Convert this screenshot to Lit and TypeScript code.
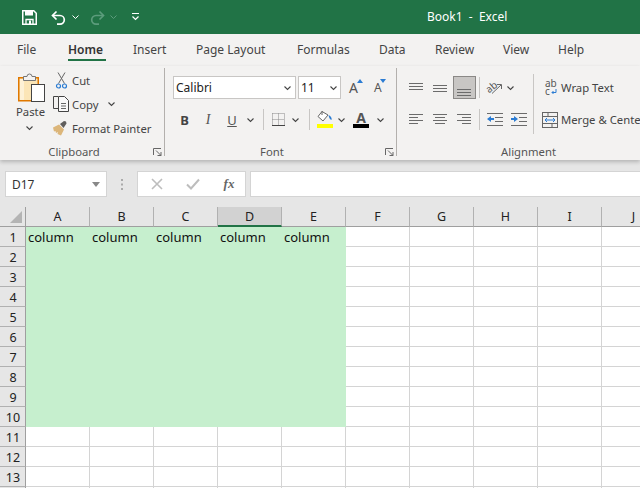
import { LitElement, html, css, svg } from "lit";
import { customElement } from "lit/decorators.js";

const chev = html`<svg class="chev" width="7" height="4" viewBox="0 0 7 4"><path d="M.5.5l3 3 3-3" fill="none" stroke="#444" stroke-width="1.1"/></svg>`;

const lines = (rows: [number, number, number][], color = "#6b6b6b") =>
  svg`${rows.map(([x1, x2, y]) => svg`<path d="M${x1} ${y + 0.5}H${x2}" stroke=${color} fill="none"/>`)}`;

const ic = (w: number, h: number, body: unknown) =>
  html`<svg width=${w} height=${h} viewBox="0 0 ${w} ${h}">${body}</svg>`;

const COLS = "ABCDEFGHIJ".split("");
const ROWS = Array.from({ length: 14 }, (_, i) => i + 1);

@customElement("app-root")
export class AppRoot extends LitElement {
  static styles = css`
    :host { display: block; width: 640px; height: 488px; overflow: hidden; background: #e6e6e6; font-family: "Noto Sans", sans-serif; color: #444; font-size: 12px; }
    * { box-sizing: border-box; }
    svg { overflow: visible; }
    .title { height: 34px; background: #217346; display: flex; align-items: center; padding-left: 22px; position: relative; color: #fff; }
    .title svg { display: block; flex: none; }
    .qa { display: flex; align-items: center; }
    .qa .s1 { margin-left: 14px; } .qa .s2 { margin-left: 6px; } .qa .s3 { margin-left: 11px; } .qa .s4 { margin-left: 5px; } .qa .s5 { margin-left: 15px; }
    .doc { position: absolute; left: 0; right: 0; top: 0; height: 33px; line-height: 33px; padding-left: 427px; font-size: 12px; white-space: pre; }
    .tabs { height: 32px; background: #f3f2f1; display: grid; grid-template-columns: 51px 65px 63px 101px 82px 56px 68px 55px auto; padding-left: 17px; }
    .tab { line-height: 32px; white-space: nowrap; height: 32px; color: #444; font-size: 12px; }
    .tab.on { font-weight: 600; color: #333; position: relative; }
    .tab.on::after { content: ""; position: absolute; left: 0; width: 38px; bottom: 5px; height: 2px; background: #217346; }
    .ribbon { height: 94px; background: #f3f2f1; display: flex; box-shadow: 0 2px 4px rgba(0,0,0,.22); position: relative; overflow: hidden; font-size: 11.3px; }
    .wrap-shadow { height: 6px; }
    .group { margin-top: 2px; height: 88px; border-right: 1px solid #b3b0ad; position: relative; display: flex; flex-direction: column; flex: none; }
    .g1 { width: 165px; } .g2 { width: 232px; } .g3 { flex: 1; border-right: 0; }
    .body { height: 77px; display: flex; flex: none; }
    .label { text-align: center; line-height: 14px; height: 14px; white-space: nowrap; font-size: 11.3px; color: #555; flex: none; }
    .g1 .label { width: 148px; }
    .g2 .label { width: 214px; }
    .g3 .label { width: 263px; }
    .launch { position: absolute; right: 2px; bottom: 0px; display: block; }
    /* clipboard */
    .paste { width: 53px; padding: 3px 0 0 18px; display: flex; flex-direction: column; }
    .paste span { margin: 3px 0 0 -2px; line-height: 14px; width: 28px; }
    .paste .chev { margin: 7px 0 0 8px; }
    .cmds { display: flex; flex-direction: column; padding-top: 0; }
    .cmd { height: 24px; display: flex; align-items: center; white-space: nowrap; }
    .cmd .icn { width: 19px; display: flex; justify-content: flex-start; flex: none; }
    .cmd .icn.cut { padding-left: 3px; }
    .cmd .chev { margin-left: 10px; }
    /* font */
    .fontbody { flex-direction: column; padding: 8px 0 0 8px; }
    .combos { display: flex; gap: 2px; height: 23px; align-items: stretch; }
    .combo { background: #fff; border: 1px solid #c8c6c4; display: flex; align-items: center; justify-content: space-between; padding: 0 4px 0 2px; color: #222; font-size: 12px; flex: none; }
    .cf { width: 123px; } .cs { width: 43px; padding-right: 3px; }
    .gw { width: 26px; padding-left: 6px; line-height: 23px; font-size: 14px; position: relative; color: #555; flex: none; }
    .gs { width: 22px; padding-left: 3px; font-size: 12px; }
    .tri { position: absolute; top: 3px; right: 6px; }
    .gs .tri { right: 7px; }
    .row2 { display: grid; grid-template-columns: 23px 24px 24px 13px 12px 18px 16px 12px 19px 14px 25px 14px; margin-top: 9px; height: 23px; align-items: center; justify-items: center; }
    .vs { width: 1px; height: 21px; background: #c8c6c4; }
    .b { font-weight: 700; font-size: 13px; color: #444; }
    .i { font-style: italic; font-family: "Liberation Serif", serif; font-size: 14px; color: #555; }
    .u { text-decoration: underline; font-size: 13px; color: #555; }
    /* alignment */
    .alignbody { padding: 8px 0 0 7px; }
    .agrid { display: grid; grid-template-columns: 24px 24px 24px 7px 24px 24px; grid-auto-rows: 23px; row-gap: 9px; align-items: center; justify-items: center; }
    .atop { align-self: start; margin-top: 3px; }
    .sel { width: 23px; height: 23px; background: #c8c6c4; border: 1px solid #8a8886; display: flex; align-items: flex-end; justify-content: center; padding-bottom: 2px; }
    .orient { display: flex; align-items: center; gap: 4px; grid-column: span 2; justify-self: start; padding-left: 3px; }
    .vs2 { width: 1px; height: 60px; background: #c8c6c4; margin: -2px 8px 0 2px; }
    .wm { display: flex; flex-direction: column; gap: 9px; }
    .wmi { height: 23px; display: flex; align-items: center; white-space: nowrap; }
    .wmi svg { width: 17px; margin-right: 2px; flex: none; }
    /* formula bar */
    .fbar { height: 41px; display: flex; padding: 5px 0 0 5px; background: #e6e6e6; }
    .box { height: 26px; background: #fff; border: 1px solid #d4d4d4; display: flex; align-items: center; flex: none; }
    .name { width: 102px; justify-content: space-between; padding: 0 6px 0 6px; color: #333; font-size: 12px; }
    .dots { width: 30px; display: flex; justify-content: center; align-items: center; height: 26px; flex: none; }
    .fbtn { width: 109px; display: grid; grid-template-columns: 36px 36px 36px; justify-items: center; padding-left: 1px; }
    .fx { font-family: "Liberation Serif", serif; font-style: italic; font-weight: 700; font-size: 13px; color: #666; }
    .finput { flex: 1; margin-left: 4px; border-right: 0; }
    /* sheet */
    .sheet { display: grid; grid-template-columns: 26px repeat(10, 64px); grid-auto-rows: 20px; background: #fff; }
    .corner { background: #e6e6e6; border-right: 1px solid #9f9f9f; border-bottom: 1px solid #9f9f9f; position: relative; display: flex; align-items: flex-end; justify-content: flex-end; padding: 0 3px 3px 0; }
    .ch { background: #e6e6e6; border-right: 1px solid #b1b1b1; border-bottom: 1px solid #9f9f9f; text-align: center; line-height: 19px; font-size: 12.5px; color: #222; }
    .ch.act { background: #d2d2d2; border-bottom: 2px solid #217346; color: #222; }
    .rh { background: #e6e6e6; border-right: 1px solid #9f9f9f; border-bottom: 1px solid #b1b1b1; text-align: center; padding-top: 1px; line-height: 19px; font-size: 12.5px; color: #222; padding-left: 1px; }
    .c { border-right: 1px solid #d4d4d4; border-bottom: 1px solid #d4d4d4; font-size: 13px; padding-top: 1px; line-height: 19px; padding-left: 2px; color: #111; white-space: nowrap; }
    .c.g { background: #c6efce; border-color: #c6efce; }
  `;

  private launcher() {
    return html`<svg class="launch" width="9" height="8" viewBox="0 0 9 8"><path d="M.5 7V.5H8M3 2.500l5 5M8 4v3.500H4.500" fill="none" stroke="#666"/></svg>`;
  }

  render() {
    const tabs = ["File", "Home", "Insert", "Page Layout", "Formulas", "Data", "Review", "View", "Help"];
    return html`
      <div class="title">
        <div class="qa">
          ${ic(15, 15, svg`<path d="M.75.75h11l2.500 2.500v11H.75z" fill="none" stroke="#fff" stroke-width="1.500"/><rect x="3" y="1" width="8" height="4.500" fill="#fff"/><path d="M4 14V9.500h7V14" fill="none" stroke="#fff" stroke-width="1.300"/><rect x="7" y="10.500" width="2" height="3.500" fill="#fff"/>`)}
          <span class="s1">${ic(15, 15, svg`<path d="M5.500 1.500L1.500 5.500l4 4" fill="none" stroke="#fff" stroke-width="1.700"/><path d="M2 5.500h7a4.300 4.300 0 0 1 0 8.600H6" fill="none" stroke="#fff" stroke-width="1.700"/>`)}</span>
          <span class="s2">${ic(7, 4, svg`<path d="M.5.5l3 3 3-3" fill="none" stroke="#fff"/>`)}</span>
          <span class="s3">${ic(15, 15, svg`<path d="M9.500 1.500l4 4-4 4" fill="none" stroke="#5c9c7c" stroke-width="1.700"/><path d="M13 5.500H6a4.300 4.300 0 0 0 0 8.600h3" fill="none" stroke="#5c9c7c" stroke-width="1.700"/>`)}</span>
          <span class="s4">${ic(7, 4, svg`<path d="M.5.5l3 3 3-3" fill="none" stroke="#5c9c7c"/>`)}</span>
          <span class="s5">${ic(7, 8, svg`<path d="M0 .5h7" stroke="#fff"/><path d="M.5 3.500l3 3 3-3" fill="none" stroke="#fff" stroke-width="1.200"/>`)}</span>
        </div>
        <div class="doc">Book1  -  Excel</div>
      </div>
      <div class="tabs">
        ${tabs.map((t) => html`<div class="tab ${t === "Home" ? "on" : ""}">${t}</div>`)}
      </div>
      <div class="ribbon">
        <div class="group g1">
          <div class="body">
            <div class="paste">
              ${ic(28, 31, svg`<rect x=".75" y="6.750" width="19.500" height="23" fill="#fbe5b6" stroke="#e07800" stroke-width="1.500"/><rect x="2" y="8" width="4" height="21" fill="#fdf1d6"/><path d="M5.500 9.500V5.500h3.500a2.500 2.500 0 0 1 5 0H17.500V9.500z" fill="#f3f2f1" stroke="#777"/><rect x="13.500" y="13.500" width="13" height="17" fill="#fff" stroke="#444"/>`)}
              <span>Paste</span>
              ${chev}
            </div>
            <div class="cmds">
              <div class="cmd">
                <span class="icn cut">${ic(11, 17, svg`<path d="M2 .5l6.500 11M9 .5L2.500 11.500" stroke="#666" fill="none"/><circle cx="2.500" cy="14" r="2" fill="none" stroke="#2b7cd3" stroke-width="1.200"/><circle cx="8.500" cy="14" r="2" fill="none" stroke="#2b7cd3" stroke-width="1.200"/>`)}</span>
                Cut
              </div>
              <div class="cmd">
                <span class="icn">${ic(16, 16, svg`<path d="M5 .5H.5v12H5" fill="none" stroke="#444"/><path d="M5.500.5h6l4 4v11h-10z" fill="#f9f9f9" stroke="#444"/><path d="M8 7.500h5M8 10h5M8 12.500h5" stroke="#666"/>`)}</span>
                Copy ${chev}
              </div>
              <div class="cmd">
                <span class="icn">${ic(16, 16, svg`<path d="M0 7.500l6-3 5 5-3 6-3.500-1.500 .5-2-2 1 -.5-2-1.500.5z" fill="#dcb67a"/><path d="M7 4l4-3 2 .5 .5 2-3 4.500z" fill="#605e5c"/>`)}</span>
                Format Painter
              </div>
            </div>
          </div>
          <div class="label">Clipboard</div>
          ${this.launcher()}
        </div>
        <div class="group g2">
          <div class="body fontbody">
            <div class="combos">
              <div class="combo cf"><span>Calibri</span>${chev}</div>
              <div class="combo cs"><span>11</span>${chev}</div>
              <div class="gw">A<svg class="tri" width="6" height="4" viewBox="0 0 6 4"><path d="M0 4l3-4 3 4z" fill="#2b7cd3"/></svg></div>
              <div class="gw gs">A<svg class="tri" width="6" height="4" viewBox="0 0 6 4"><path d="M0 0l3 4 3-4z" fill="#2b7cd3"/></svg></div>
            </div>
            <div class="row2">
              <span class="b">B</span><span class="i">I</span><span class="u">U</span>${chev}
              <span class="vs"></span>
              ${ic(13, 13, svg`<path d="M.5 .5H12.500V12.500M.5.5V12.500M6.500.5V12.500M.5 6.500H12.500" fill="none" stroke="#888" stroke-dasharray="1 1"/><path d="M0 12.500H13" stroke="#444"/>`)}
              ${chev}
              <span class="vs"></span>
              ${ic(16, 19, svg`<path d="M5 1.500l-4 5 5 4.500 5-6z" fill="#fff" stroke="#666"/><path d="M5 1V5" stroke="#666"/><path d="M11.500 5c2.500 1 3.500 3 3 5-1.500-.5-2.500-2-3-5z" fill="#2b7cd3"/><rect x="0" y="14" width="16" height="4" fill="#ffff00"/>`)}
              ${chev}
              <svg width="16" height="19" viewBox="0 0 16 19"><text x="8" y="13" text-anchor="middle" font-size="14" font-weight="700" font-family="Noto Sans" fill="#555">A</text><rect y="14" width="16" height="4" fill="#000"/></svg>
              ${chev}
            </div>
          </div>
          <div class="label">Font</div>
          ${this.launcher()}
        </div>
        <div class="group g3">
          <div class="body alignbody">
            <div class="agrid">
              <span class="atop">${ic(14, 8, lines([[0, 14, 0], [0, 14, 3], [0, 14, 6]]))}</span>
              ${ic(14, 8, lines([[0, 14, 1], [0, 14, 4], [0, 14, 7]]))}
              <div class="sel">${ic(14, 8, lines([[0, 14, 1], [0, 14, 4], [0, 14, 7]]))}</div>
              <span class="vs"></span>
              <div class="orient">
                ${ic(17, 15, svg`<text x="0" y="11" font-size="10" font-family="Noto Sans" fill="#555" transform="rotate(-40 5 8)">ab</text><path d="M6 13.500L15 5M11 4.500h4.500V9" fill="none" stroke="#666"/>`)}
                ${chev}
              </div>
              ${ic(14, 11, lines([[0, 14, 0], [0, 9, 3], [0, 14, 6], [0, 9, 9]]))}
              ${ic(14, 11, lines([[0, 14, 0], [2, 12, 3], [0, 14, 6], [2, 12, 9]]))}
              ${ic(14, 11, lines([[0, 14, 0], [5, 14, 3], [0, 14, 6], [5, 14, 9]]))}
              <span class="vs"></span>
              ${ic(16, 13, svg`${lines([[0, 16, 0], [8, 16, 4], [8, 16, 8], [0, 16, 12]])}<path d="M0 6l4-3v2h3v2H4v2z" fill="#2b7cd3"/>`)}
              ${ic(16, 13, svg`${lines([[0, 16, 0], [8, 16, 4], [8, 16, 8], [0, 16, 12]])}<path d="M7 6L3 3v2H0v2h3v2z" fill="#2b7cd3"/>`)}
            </div>
            <div class="vs2"></div>
            <div class="wm">
              <div class="wmi">
                <svg width="17" height="16" viewBox="0 0 17 16"><text x="3" y="7" font-size="10" font-family="Noto Sans" fill="#555">ab</text><text x="3" y="15" font-size="10" font-family="Noto Sans" fill="#555">c</text><path d="M14 9v3.500H10M11.500 11L10 12.500 11.500 14" fill="none" stroke="#2b7cd3"/></svg>
                Wrap Text
              </div>
              <div class="wmi">
                <svg width="17" height="16" viewBox="0 0 17 16"><rect x=".5" y=".5" width="15" height="15" fill="none" stroke="#666"/><path d="M.5 4.500h15M.5 11.500h15M6 .5v4M10 11.500v4" stroke="#666" fill="none"/><path d="M3 8h10" stroke="#2b7cd3"/><path d="M5 6L3 8l2 2M11 6l2 2-2 2" fill="none" stroke="#2b7cd3"/></svg>
                Merge &amp; Center
              </div>
            </div>
          </div>
          <div class="label">Alignment</div>
        </div>
      </div>
      <div class="wrap-shadow"></div>
      <div class="fbar">
        <div class="box name"><span>D17</span>${ic(8, 5, svg`<path d="M0 0h8L4 5z" fill="#888"/>`)}</div>
        <div class="dots">${ic(2, 11, svg`<path d="M1 0v2M1 4.500v2M1 9v2" stroke="#aaa" stroke-width="2"/>`)}</div>
        <div class="box fbtn">
          ${ic(12, 12, svg`<path d="M1 1l10 10M11 1L1 11" stroke="#bdbdbd" stroke-width="1.600"/>`)}
          ${ic(14, 12, svg`<path d="M1 6.500l4 4 8-9" fill="none" stroke="#bdbdbd" stroke-width="2"/>`)}
          <span class="fx">fx</span>
        </div>
        <div class="box finput"></div>
      </div>
      <div class="sheet">
        <div class="corner">${ic(12, 12, svg`<path d="M12 0v12H0z" fill="#b4b4b4"/>`)}</div>
        ${COLS.map((c) => html`<div class="ch ${c === "D" ? "act" : ""}">${c}</div>`)}
        ${ROWS.map(
          (r) => html`
            <div class="rh">${r < 14 ? r : ""}</div>
            ${COLS.map((_, i) => {
              const green = r <= 10 && i < 5;
              return html`<div class="c ${green ? "g" : ""}">${r === 1 && i < 5 ? "column" : ""}</div>`;
            })}
          `
        )}
      </div>
    `;
  }
}
